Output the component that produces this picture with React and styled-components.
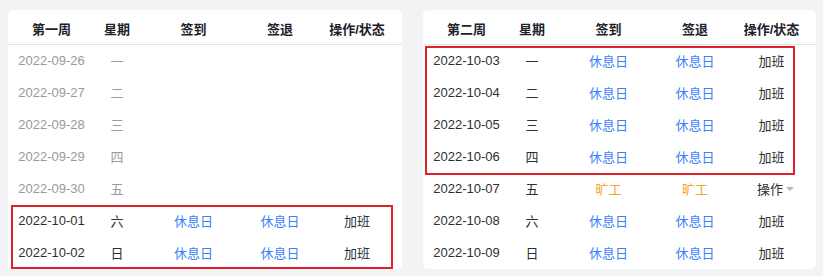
import React from 'react'
import styled, { createGlobalStyle } from 'styled-components'

const GlobalStyle = createGlobalStyle`
    body{
        margin:0;
        background:#f2f3f5;
        font-family:"Liberation Sans","Noto Sans CJK SC",sans-serif;
    }
`

const COLS = '87px 44px 109px 64px 1fr'

const weeks = [
    {
        title: '第一周',
        rows: [
            { date: '2022-09-26', day: '一', off: true },
            { date: '2022-09-27', day: '二', off: true },
            { date: '2022-09-28', day: '三', off: true },
            { date: '2022-09-29', day: '四', off: true },
            { date: '2022-09-30', day: '五', off: true },
            { date: '2022-10-01', day: '六', status: 'rest' },
            { date: '2022-10-02', day: '日', status: 'rest' },
        ],
        mark: { from: 5, to: 7, box: { top: 0, left: 3, right: 9, bottom: 0 } },
    },
    {
        title: '第二周',
        rows: [
            { date: '2022-10-03', day: '一', status: 'rest' },
            { date: '2022-10-04', day: '二', status: 'rest' },
            { date: '2022-10-05', day: '三', status: 'rest' },
            { date: '2022-10-06', day: '四', status: 'rest' },
            { date: '2022-10-07', day: '五', status: 'absent' },
            { date: '2022-10-08', day: '六', status: 'rest' },
            { date: '2022-10-09', day: '日', status: 'rest' },
        ],
        mark: { from: 0, to: 4, box: { top: 1, left: 2, right: 21, bottom: -2 } },
    },
]

const Row = ({ row }) => {
    if (row.off) {
        return (
            <RowLine>
                <Cell $muted>{row.date}</Cell>
                <Cell $muted>{row.day}</Cell>
                <Cell />
                <Cell />
                <Cell />
            </RowLine>
        )
    }
    const rest = row.status === 'rest'
    return (
        <RowLine>
            <Cell>{row.date}</Cell>
            <Cell>{row.day}</Cell>
            <Cell $tone={rest ? 'blue' : 'orange'}>{rest ? '休息日' : '旷工'}</Cell>
            <Cell $tone={rest ? 'blue' : 'orange'}>{rest ? '休息日' : '旷工'}</Cell>
            <Cell>
                {rest ? '加班' : (
                    <Dropdown>操作<Caret /></Dropdown>
                )}
            </Cell>
        </RowLine>
    )
}

const WeekTable = ({ week }) => {
    const { from, to, box } = week.mark
    const before = week.rows.slice(0, from)
    const marked = week.rows.slice(from, to)
    const after = week.rows.slice(to)
    return (
        <Card>
            <Head>
                <HeadCell>{week.title}</HeadCell>
                <HeadCell>星期</HeadCell>
                <HeadCell>签到</HeadCell>
                <HeadCell>签退</HeadCell>
                <HeadCell>操作/状态</HeadCell>
            </Head>
            {before.map(r => <Row key={r.date} row={r} />)}
            <Marked $box={box}>
                {marked.map(r => <Row key={r.date} row={r} />)}
            </Marked>
            {after.map(r => <Row key={r.date} row={r} />)}
        </Card>
    )
}

const App = () => {
    return (
        <>
            <GlobalStyle />
            <Page>
                {weeks.map(w => <WeekTable key={w.title} week={w} />)}
            </Page>
        </>
    )
}

export default App

const Page = styled.div`
    display:grid;
    grid-template-columns:394px 393px;
    column-gap:21px;
    padding:10px 7px 0 8px;
    align-items:start;
`

const Card = styled.div`
    background:#fff;
    border-radius:5px;
    height:259px;
`

const Head = styled.div`
    display:grid;
    grid-template-columns:${COLS};
    height:35px;
    align-items:center;
    padding-top:2px;
    box-sizing:border-box;
    border-bottom:1px solid #e1e3e8;
`

const HeadCell = styled.div`
    text-align:center;
    font-size:13px;
    font-weight:700;
    color:#1d2129;
`

const RowLine = styled.div`
    display:grid;
    grid-template-columns:${COLS};
    height:32px;
    align-items:center;
`

const toneColor = {
    blue: '#3b82f6',
    orange: '#f5a623',
}

const Cell = styled.div`
    text-align:center;
    font-size:13px;
    color:${p => p.$muted ? '#9a9a9a' : (toneColor[p.$tone] || '#2b2f36')};
    padding-bottom:2px;
`

const Marked = styled.div`
    position:relative;

    &:after{
        content:"";
        position:absolute;
        top:${p => p.$box.top}px;
        left:${p => p.$box.left}px;
        right:${p => p.$box.right}px;
        bottom:${p => p.$box.bottom}px;
        border:2px solid #e0202a;
        pointer-events:none;
    }
`

const Dropdown = styled.span`
    display:inline-flex;
    align-items:center;
    gap:3px;
    color:#2b2f36;
    cursor:pointer;
    padding-left:8px;
`

const Caret = styled.span`
    width:0;
    height:0;
    border-left:4px solid transparent;
    border-right:4px solid transparent;
    border-top:4px solid #b5b8be;
    margin-top:1px;
`
